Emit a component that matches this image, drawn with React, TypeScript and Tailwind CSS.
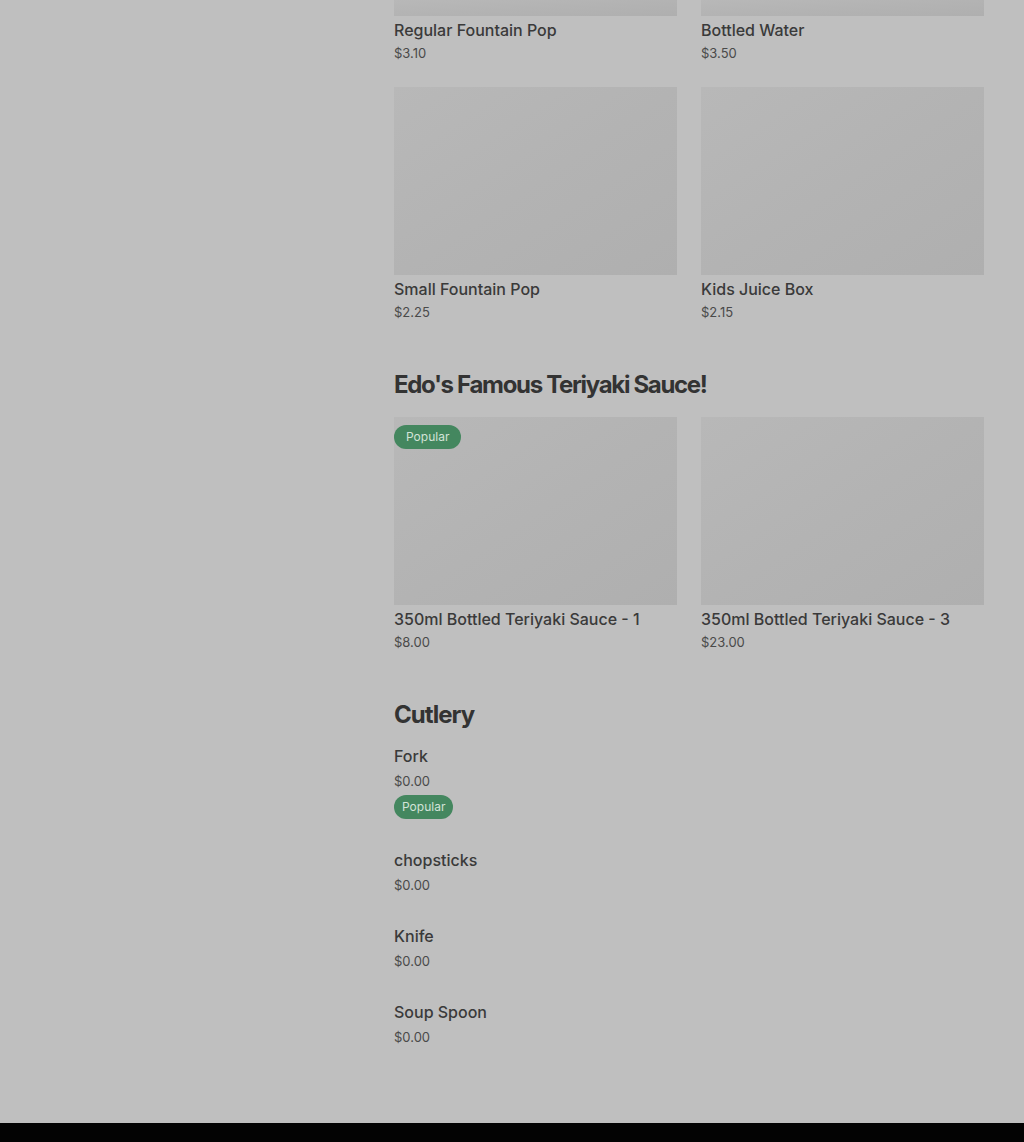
import React from 'react';

type Item = {
    name: string;
    price: string;
    popular?: boolean;
};

const drinksTop: Item[] = [
    { name: 'Regular Fountain Pop', price: '$3.10' },
    { name: 'Bottled Water', price: '$3.50' },
];

const drinks: Item[] = [
    { name: 'Small Fountain Pop', price: '$2.25' },
    { name: 'Kids Juice Box', price: '$2.15' },
];

const sauces: Item[] = [
    { name: '350ml Bottled Teriyaki Sauce - 1', price: '$8.00', popular: true },
    { name: '350ml Bottled Teriyaki Sauce - 3', price: '$23.00' },
];

const cutlery: Item[] = [
    { name: 'Fork', price: '$0.00', popular: true },
    { name: 'chopsticks', price: '$0.00' },
    { name: 'Knife', price: '$0.00' },
    { name: 'Soup Spoon', price: '$0.00' },
];

const ItemCard: React.FC<{ item: Item; imageClass: string }> = ({ item, imageClass }) => (
    <div>
        <div className={`relative w-full bg-gradient-to-br from-[#b8b8b8] via-[#b3b3b3] to-[#afafaf] ${imageClass}`}>
            {item.popular && (
                <div className="absolute top-2 left-0 flex">
                    <span className="flex items-center h-6 px-3 rounded-full bg-[#44875f] text-[12px] leading-none text-[#d3e3d8]">
                        Popular
                    </span>
                </div>
            )}
        </div>
        <div className="mt-0.5 text-[16px] leading-6 font-medium text-[#3a3a3a]">{item.name}</div>
        <div className="mt-[3px] text-[13px] leading-4 text-[#4a4a4a]">{item.price}</div>
    </div>
);

export default function App() {
    return (
        <div className="min-h-[1142px] bg-[#bfbfbf] flex flex-col" style={{ fontFamily: 'Inter, "Noto Sans", sans-serif' }}>
            <div className="flex flex-1">
                <div className="w-[394px] shrink-0"></div>
                <main className="w-[590px]">
                    <div className="grid grid-cols-2 gap-x-6 gap-y-[26px]">
                        {drinksTop.map((item) => (
                            <ItemCard key={item.name} item={item} imageClass="h-4" />
                        ))}
                        {drinks.map((item) => (
                            <ItemCard key={item.name} item={item} imageClass="h-[188px]" />
                        ))}
                    </div>

                    <h2 className="mt-[49px] text-[24px] leading-8 font-bold tracking-[-0.055em] text-[#333333]">
                        Edo's Famous Teriyaki Sauce!
                    </h2>
                    <div className="mt-4 grid grid-cols-2 gap-x-6">
                        {sauces.map((item) => (
                            <ItemCard key={item.name} item={item} imageClass="h-[188px]" />
                        ))}
                    </div>

                    <h2 className="mt-[49px] text-[24px] leading-8 font-bold tracking-[-0.04em] text-[#333333]">
                        Cutlery
                    </h2>
                    <div className="mt-[13px] flex flex-col">
                        {cutlery.map((item) => (
                            <div key={item.name} className={item.popular ? 'pb-[29px]' : 'pb-[31px]'}>
                                <div className="text-[16px] leading-6 font-medium text-[#3a3a3a]">{item.name}</div>
                                <div className="mt-[5px] text-[13px] leading-4 text-[#4a4a4a]">{item.price}</div>
                                {item.popular && (
                                    <div className="mt-1.5 flex">
                                        <span className="flex items-center h-6 px-2 rounded-full bg-[#44875f] text-[12px] leading-none text-[#d3e3d8]">
                                            Popular
                                        </span>
                                    </div>
                                )}
                            </div>
                        ))}
                    </div>
                </main>
            </div>
            <div className="h-[19px] bg-[#030303]"></div>
        </div>
    );
}
